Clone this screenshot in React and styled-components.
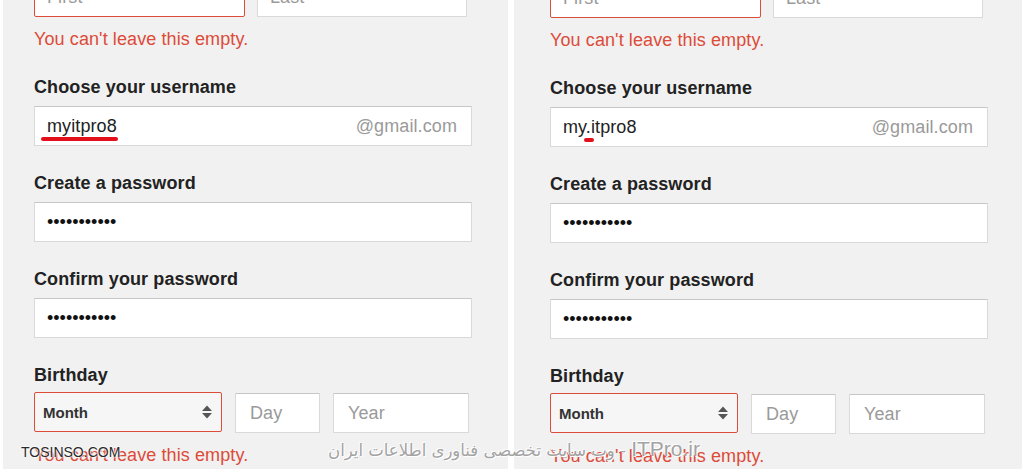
import React from 'react';
import styled, { createGlobalStyle } from 'styled-components';

const GlobalStyle = createGlobalStyle`
    body {
        margin: 0;
        background: #fff;
        font-family: "Liberation Sans", Arial, sans-serif;
    }
`;

const Stage = styled.div`
    position: relative;
    display: flex;
    gap: 6px;
    width: 1024px;
    height: 472px;
    padding-left: 3px;
    box-sizing: border-box;
    overflow: hidden;
`;

const Panel = styled.div`
    width: ${({ $w }) => $w}px;
    height: 469px;
    padding-left: ${({ $pad }) => $pad}px;
    background: #f1f1f1;
    box-sizing: border-box;
    overflow: hidden;
`;

const Form = styled.div`
    width: 438px;
    display: flex;
    flex-direction: column;
    margin-top: ${({ $top }) => $top}px;
`;

const NameRow = styled.div`
    display: grid;
    grid-template-columns: 211px 210px;
    gap: 12px;
`;

const Box = styled.div`
    height: 40px;
    box-sizing: border-box;
    display: flex;
    align-items: center;
    justify-content: space-between;
    padding: 0 14px 0 12px;
    background: #fff;
    border: 1px solid ${({ $error }) => ($error ? '#dd4b39' : '#d9d9d9')};
    border-top-color: ${({ $error }) => ($error ? '#dd4b39' : '#c6c6c6')};
    border-radius: ${({ $error }) => ($error ? '2px' : '1px')};
    font-size: 18px;
    letter-spacing: 0.1px;
    color: #222;
`;

const Hint = styled.span`
    color: #9a9a9a;
`;

const Dots = styled.span`
    font-size: 18px;
    letter-spacing: 0;
    color: #111;
`;

const ErrorText = styled.div`
    margin-top: ${({ $mt }) => $mt}px;
    font-size: 18px;
    line-height: 22px;
    letter-spacing: 0.1px;
    color: #dd4b39;
`;

const Field = styled.div`
    margin-top: 26px;
`;

const Label = styled.div`
    font-size: 18px;
    line-height: 22px;
    font-weight: bold;
    letter-spacing: 0.1px;
    color: #222;
    margin-bottom: ${({ $mb }) => $mb ?? 8}px;
`;

const Typed = styled.span`
    position: relative;
`;

/* red marker strokes drawn over the typed name */
const Mark = styled.span`
    position: absolute;
    left: ${({ $left }) => $left}px;
    width: ${({ $width }) => $width}px;
    bottom: ${({ $bottom }) => $bottom}px;
    height: 4px;
    border-radius: 2px;
    background: #e3101c;
`;

const DateRow = styled.div`
    display: grid;
    grid-template-columns: 188px 85px 136px;
    gap: 13px;
`;

const Select = styled.div`
    height: 40px;
    box-sizing: border-box;
    display: flex;
    align-items: center;
    justify-content: space-between;
    padding: 0 9px 0 8px;
    background: #f6f6f6;
    border: 1px solid #dd4b39;
    border-radius: 2px;
    font-size: 15px;
    font-weight: bold;
    color: #333;
`;

const DateBox = styled(Box)`
    margin-top: 1px;
    padding-left: 14px;
`;

const Watermark = styled.span`
    position: absolute;
    top: ${({ $top }) => $top}px;
    left: ${({ $left }) => ($left != null ? `${$left}px` : 'auto')};
    right: ${({ $right }) => ($right != null ? `${$right}px` : 'auto')};
    white-space: nowrap;
`;

const SiteMark = styled(Watermark)`
    font-size: 14px;
    color: #2a2a2a;
    text-shadow: 0 0 2px #fff, 0 0 2px #fff, 0 0 2px #fff;
`;

const PersianMark = styled(Watermark)`
    direction: rtl;
    font-family: "DejaVu Sans", sans-serif;
    font-size: 16.5px;
    color: #a3a3a3;
    text-shadow: 1px 1px 0 #fff, -1px -1px 0 #fff;
`;

const Latin = styled.span`
    font-family: "Liberation Sans", Arial, sans-serif;
    font-size: 21px;
`;

const Arrows = () => (
    <svg width="10" height="14" viewBox="0 0 10 14">
        <polygon points="0,6 5,0.5 10,6" fill="#555" />
        <polygon points="0,8 5,13.5 10,8" fill="#555" />
    </svg>
);

const SignupForm = ({ top, username, mark }) => (
    <Form $top={top}>
        <NameRow>
            <Box $error><Hint>First</Hint></Box>
            <Box><Hint>Last</Hint></Box>
        </NameRow>
        <ErrorText $mt={11}>You can't leave this empty.</ErrorText>

        <Field>
            <Label>Choose your username</Label>
            <Box>
                <Typed>
                    {username}
                    <Mark $left={mark.left} $width={mark.width} $bottom={-4} />
                </Typed>
                <Hint>@gmail.com</Hint>
            </Box>
        </Field>

        <Field>
            <Label>Create a password</Label>
            <Box><Dots>•••••••••••</Dots></Box>
        </Field>

        <Field>
            <Label>Confirm your password</Label>
            <Box><Dots>•••••••••••</Dots></Box>
        </Field>

        <Field>
            <Label $mb={6}>Birthday</Label>
            <DateRow>
                <Select>Month<Arrows /></Select>
                <DateBox><Hint>Day</Hint></DateBox>
                <DateBox><Hint>Year</Hint></DateBox>
            </DateRow>
        </Field>
        <ErrorText $mt={11}>You can't leave this empty.</ErrorText>
    </Form>
);

const App = () => (
    <>
        <GlobalStyle />
        <Stage>
            <Panel $w={505} $pad={31}>
                <SignupForm top={-23} username="myitpro8" mark={{ left: -6, width: 77 }} />
            </Panel>
            <Panel $w={508} $pad={36}>
                <SignupForm top={-22} username="my.itpro8" mark={{ left: 21, width: 10 }} />
            </Panel>
            <SiteMark $top={444} $left={21}>TOSINSO.COM</SiteMark>
            <PersianMark $top={437} $right={324}><Latin>ITPro.ir</Latin> - وب سایت تخصصی فناوری اطلاعات ایران</PersianMark>
        </Stage>
    </>
);

export default App;
